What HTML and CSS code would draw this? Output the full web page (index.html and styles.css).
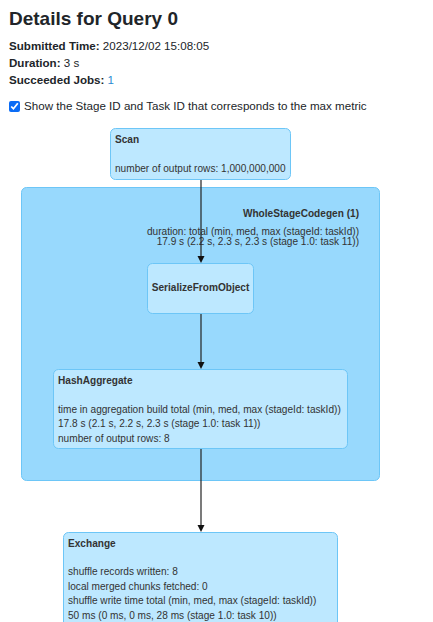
FILE: index.html
```html
<!DOCTYPE html>
<html lang="en">
<head>
    <meta charset="UTF-8">
    <meta name="viewport" content="width=device-width, initial-scale=1.0">
    <title>Details for Query 0</title>
    <link rel="stylesheet" href="styles.css">
</head>
<body>
    <div class="query-header">
        <h3 class="query-title">Details for Query 0</h3>
        <ul class="query-summary">
            <li><strong>Submitted Time:</strong> 2023/12/02 15:08:05</li>
            <li><strong>Duration:</strong> 3 s</li>
            <li><strong>Succeeded Jobs:</strong> <a href="#" class="job-link">1</a></li>
        </ul>
        <div class="stage-toggle">
            <input type="checkbox" id="stageTaskSwitch" class="stage-checkbox" checked>
            <label for="stageTaskSwitch">Show the Stage ID and Task ID that corresponds to the max metric</label>
        </div>
    </div>

    <!-- plan graph, coordinates are page coordinates (viewBox starts at y=120) -->
    <svg class="plan-viz" width="433" height="502" viewBox="0 120 433 502">
        <g class="cluster">
            <rect x="21.5" y="187.5" width="358" height="293" rx="5"></rect>
            <text class="label bold" x="359" y="217" text-anchor="end">WholeStageCodegen (1)</text>
            <text class="label" x="359" y="235" text-anchor="end">duration: total (min, med, max (stageId: taskId))</text>
            <text class="label" x="359" y="245" text-anchor="end">17.9 s (2.2 s, 2.3 s, 2.3 s (stage 1.0: task 11))</text>
        </g>

        <g class="edges">
            <line x1="201" y1="179" x2="201" y2="257"></line>
            <polygon points="197.5,256 204.5,256 201,263"></polygon>
            <line x1="201" y1="313" x2="201" y2="363"></line>
            <polygon points="197.5,362 204.5,362 201,369"></polygon>
            <line x1="201" y1="449" x2="201" y2="526"></line>
            <polygon points="197.5,525 204.5,525 201,532"></polygon>
        </g>

        <g class="node">
            <rect x="110.5" y="128.5" width="180" height="51" rx="5"></rect>
            <text class="label bold" x="115" y="143">Scan</text>
            <text class="label" x="115" y="172">number of output rows: 1,000,000,000</text>
        </g>

        <g class="node">
            <rect x="147.5" y="263.5" width="106" height="50" rx="5"></rect>
            <text class="label bold" x="200.5" y="291" text-anchor="middle">SerializeFromObject</text>
        </g>

        <g class="node">
            <rect x="53.5" y="369.5" width="294" height="79" rx="5"></rect>
            <text class="label bold" x="58" y="384">HashAggregate</text>
            <text class="label" x="58" y="412.5">time in aggregation build total (min, med, max (stageId: taskId))</text>
            <text class="label" x="58" y="427">17.8 s (2.1 s, 2.2 s, 2.3 s (stage 1.0: task 11))</text>
            <text class="label" x="58" y="441.5">number of output rows: 8</text>
        </g>

        <g class="node">
            <rect x="63.5" y="532.5" width="274" height="120" rx="5"></rect>
            <text class="label bold" x="68" y="546.5">Exchange</text>
            <text class="label" x="68" y="575">shuffle records written: 8</text>
            <text class="label" x="68" y="589.5">local merged chunks fetched: 0</text>
            <text class="label" x="68" y="604">shuffle write time total (min, med, max (stageId: taskId))</text>
            <text class="label" x="68" y="618.5">50 ms (0 ms, 0 ms, 28 ms (stage 1.0: task 10))</text>
        </g>
    </svg>
</body>
</html>
```

FILE: styles.css
```css
body {
    margin: 0;
    padding: 0;
    background: #ffffff;
    color: #212529;
    font-family: "Liberation Sans", Arial, sans-serif;
    overflow: hidden;
}

.query-header {
    padding: 0 9px;
}

.query-title {
    margin: 0;
    padding-top: 7px;
    font-size: 19px;
    font-weight: 700;
    line-height: 24px;
    color: #212529;
}

.query-summary {
    list-style: none;
    margin: 6px 0 0;
    padding: 0;
    font-size: 11.6px;
    line-height: 17px;
}

.query-summary strong {
    font-weight: 700;
}

.job-link {
    color: #2a8ad2;
    text-decoration: none;
}

.stage-toggle {
    display: flex;
    align-items: center;
    margin-top: 10px;
    font-size: 11.6px;
    line-height: 16px;
}

.stage-checkbox {
    width: 11px;
    height: 11px;
    margin: 0 4px 0 0;
    accent-color: #0b6cf5;
}

.plan-viz {
    display: block;
    position: absolute;
    left: 0;
    top: 120px;
}

.plan-viz .cluster rect {
    fill: #98d9fd;
    stroke: #6dc6f7;
    stroke-width: 1px;
}

.plan-viz .node rect {
    fill: #bde8ff;
    stroke: #6dc6f7;
    stroke-width: 1px;
}

.plan-viz .edges line {
    stroke: #222;
    stroke-width: 1.2px;
}

.plan-viz .edges polygon {
    fill: #111;
}

.plan-viz .label {
    font-family: "Liberation Sans", Arial, sans-serif;
    font-size: 10.1px;
    fill: #333;
}

.plan-viz .label.bold {
    font-weight: 700;
}
```
